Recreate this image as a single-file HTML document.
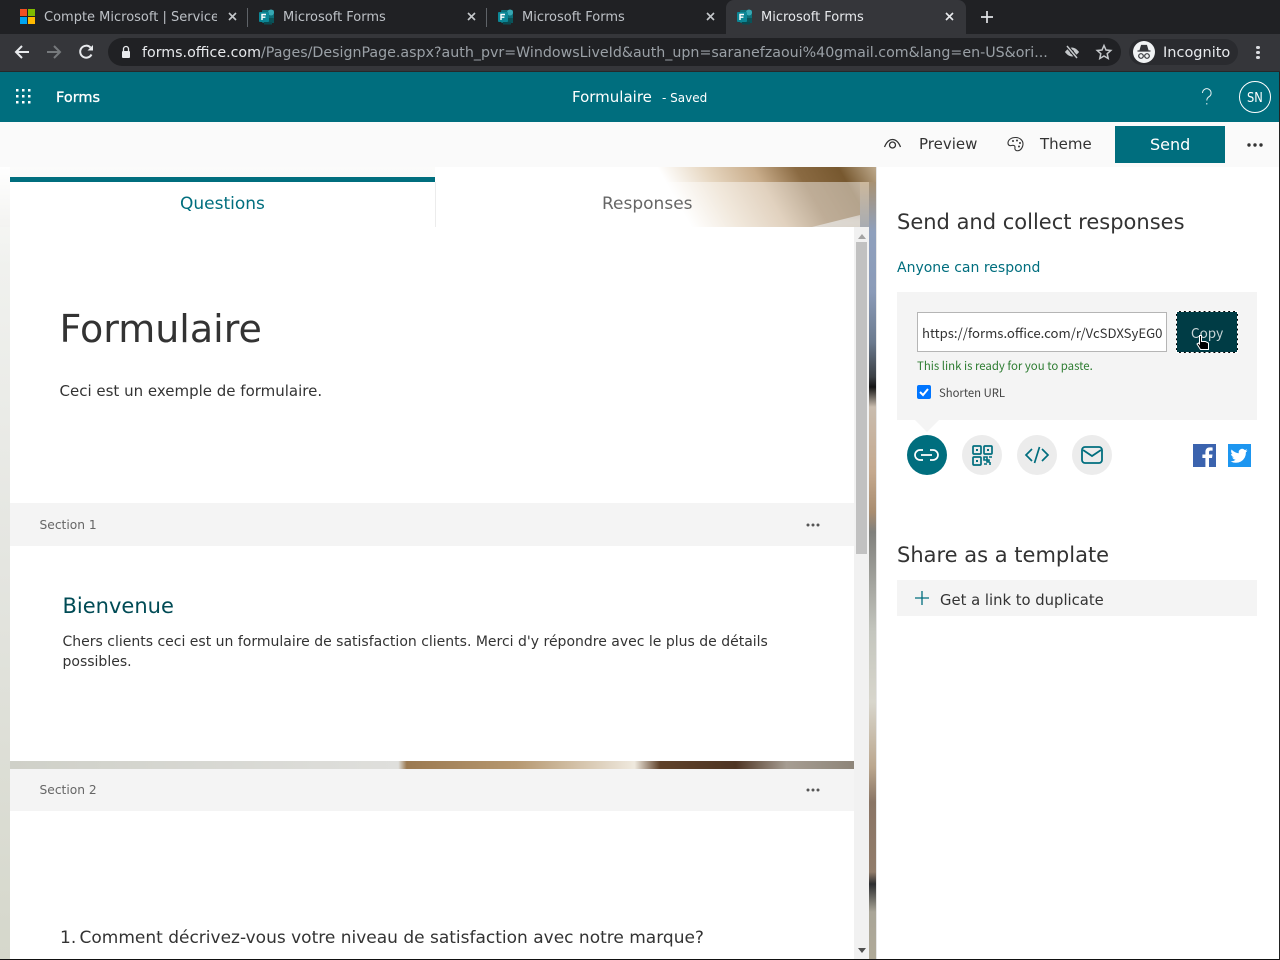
<!DOCTYPE html>
<html><head><meta charset="utf-8"><style>
html,body{margin:0;padding:0;background:#fff}
body{width:1280px;height:960px;position:relative;overflow:hidden;font-family:"DejaVu Sans",sans-serif}
.a{position:absolute}
.t{position:absolute;white-space:nowrap;line-height:1}
.n{font-family:"Noto Sans CJK JP","Liberation Sans",sans-serif}
svg{position:absolute;overflow:visible}
</style></head><body>
<svg width="0" height="0" style="left:0;top:0"><defs><symbol id="ff" viewBox="0 0 16 16"><rect x="3" y="1" width="12" height="13" rx="1" fill="#0d6f78"/><circle cx="12" cy="3.500" r="3" fill="#37a8b4"/><rect x="9" y="9" width="6" height="5" fill="#0a5359"/><rect x="5" y="13" width="8" height="2.500" fill="#0a4a50"/><rect x="0" y="3" width="10" height="10" rx="1" fill="#0c8796"/><path d="M3 11V5.500h4M3 8.200h3.400" stroke="#fff" stroke-width="1.400" fill="none"/></symbol></defs></svg>
<!-- chrome -->
<div class="a" style="left:0;top:0;width:1280px;height:34px;background:#202124"></div>
<div class="a" style="left:0;top:34px;width:1280px;height:38px;background:#35363a"></div>
<div class="a" style="left:0;top:71px;width:1280px;height:1px;background:#26282a"></div>
<div class="a" style="left:726px;top:0;width:240px;height:34px;background:#35363a;border-radius:8px 8px 0 0"></div>
<div class="a" style="left:247px;top:8px;width:1px;height:19px;background:#5f6368"></div>
<div class="a" style="left:486px;top:8px;width:1px;height:19px;background:#5f6368"></div>
<!-- ms logo -->
<div class="a" style="left:20px;top:9px;width:7px;height:7px;background:#f25022"></div>
<div class="a" style="left:28px;top:9px;width:7px;height:7px;background:#7fba00"></div>
<div class="a" style="left:20px;top:17px;width:7px;height:7px;background:#00a4ef"></div>
<div class="a" style="left:28px;top:17px;width:7px;height:7px;background:#ffb900"></div>
<div class="t" style="left:44px;top:11px;font-size:13px;color:#bdc1c6;width:173px;overflow:hidden">Compte Microsoft | Service</div>
<svg style="left:259px;top:9px" width="16" height="16"><use href="#ff"/></svg>
<svg style="left:498px;top:9px" width="16" height="16"><use href="#ff"/></svg>
<svg style="left:737px;top:9px" width="16" height="16"><use href="#ff"/></svg>
<div class="t" style="left:283px;top:11px;font-size:13px;color:#bdc1c6">Microsoft Forms</div>
<div class="t" style="left:522px;top:11px;font-size:13px;color:#bdc1c6">Microsoft Forms</div>
<div class="t" style="left:761px;top:11px;font-size:13px;color:#e8eaed">Microsoft Forms</div>
<svg style="left:228px;top:12px" width="9" height="9"><path d="M1 1l7 7M8 1l-7 7" stroke="#c4c7ca" stroke-width="1.600"/></svg>
<svg style="left:467px;top:12px" width="9" height="9"><path d="M1 1l7 7M8 1l-7 7" stroke="#c4c7ca" stroke-width="1.600"/></svg>
<svg style="left:706px;top:12px" width="9" height="9"><path d="M1 1l7 7M8 1l-7 7" stroke="#c4c7ca" stroke-width="1.600"/></svg>
<svg style="left:945px;top:12px" width="9" height="9"><path d="M1 1l7 7M8 1l-7 7" stroke="#e8eaed" stroke-width="1.600"/></svg>
<svg style="left:981px;top:11px" width="12" height="12"><path d="M6 0v12M0 6h12" stroke="#e0e2e5" stroke-width="1.700"/></svg>
<svg style="left:14px;top:44px" width="16" height="16"><path d="M15 8H2M8 2L2 8l6 6" stroke="#e8eaed" stroke-width="2" fill="none"/></svg>
<svg style="left:46px;top:44px" width="16" height="16"><path d="M1 8h13M8 2l6 6-6 6" stroke="#76797c" stroke-width="2" fill="none"/></svg>
<svg style="left:78px;top:44px" width="16" height="16"><path d="M13.500 10.500A6 6 0 1 1 12.500 3.500" stroke="#e8eaed" stroke-width="2" fill="none"/><path d="M9.500 6.500H15V1z" fill="#e8eaed"/></svg>
<div class="a" style="left:108px;top:38px;width:1013px;height:28px;border-radius:14px;background:#202124"></div>
<svg style="left:120px;top:45px" width="12" height="14"><rect x="2" y="6" width="8" height="7" rx="1" fill="#e8eaed"/><path d="M3.500 6V4a2.500 2.500 0 0 1 5 0v2" stroke="#e8eaed" stroke-width="1.300" fill="none"/></svg>
<div class="t" style="left:142px;top:45px;font-size:14.220px;line-height:16px;color:#9aa0a6;width:907px;overflow:hidden"><span style="color:#e8eaed">forms.office.com</span>/Pages/DesignPage.aspx?auth_pvr=WindowsLiveId&amp;auth_upn=saranefzaoui%40gmail.com&amp;lang=en-US&amp;ori...</div>
<svg style="left:1064px;top:44px" width="16" height="16"><path d="M1 8s3-4.500 7-4.500S15 8 15 8s-3 4.500-7 4.500S1 8 1 8z" fill="#c4c7ca"/><circle cx="8" cy="8" r="2" fill="#202124"/><path d="M3 2l10 12" stroke="#202124" stroke-width="3.500"/><path d="M3 2l10 12" stroke="#c4c7ca" stroke-width="1.500"/></svg>
<svg style="left:1096px;top:44px" width="16" height="16"><path d="M8 1.500l2 4.500 4.800.5-3.600 3.200 1 4.800L8 12l-4.200 2.500 1-4.800L1.200 6.500 6 6z" stroke="#c4c7ca" stroke-width="1.500" fill="none"/></svg>
<div class="a" style="left:1129px;top:39px;width:109px;height:26px;border-radius:13px;background:#2a2b2f"></div>
<div class="a" style="left:1133px;top:41px;width:22px;height:22px;border-radius:11px;background:#f1f3f4"></div>
<svg style="left:1133px;top:41px" width="22" height="22"><path d="M7 9.500l1.500-5h5l1.500 5zM4.500 10h13" stroke="#35363a" stroke-width="1.200" fill="#35363a"/><circle cx="8" cy="15" r="2.300" stroke="#35363a" stroke-width="1.200" fill="none"/><circle cx="14" cy="15" r="2.300" stroke="#35363a" stroke-width="1.200" fill="none"/></svg>
<div class="t" style="left:1163px;top:46px;font-size:14.500px;line-height:15px;color:#e8eaed">Incognito</div>
<div class="a" style="left:1256px;top:46px;width:4px;height:3px;border-radius:2px;background:#dadce0"></div>
<div class="a" style="left:1256px;top:51px;width:4px;height:3px;border-radius:2px;background:#dadce0"></div>
<div class="a" style="left:1256px;top:56px;width:4px;height:3px;border-radius:2px;background:#dadce0"></div>
<!-- app bar -->
<div class="a" style="left:0;top:72px;width:1280px;height:50px;background:#006e7e"></div>
<svg style="left:15px;top:88px" width="17" height="17" fill="#fff"><rect x="1" y="1" width="2.500" height="2.500"/><rect x="7" y="1" width="2.500" height="2.500"/><rect x="13" y="1" width="2.500" height="2.500"/><rect x="1" y="7" width="2.500" height="2.500"/><rect x="7" y="7" width="2.500" height="2.500"/><rect x="13" y="7" width="2.500" height="2.500"/><rect x="1" y="13" width="2.500" height="2.500"/><rect x="7" y="13" width="2.500" height="2.500"/><rect x="13" y="13" width="2.500" height="2.500"/></svg>
<div class="t" style="left:56px;top:91px;font-size:14.500px;color:#fff;-webkit-text-stroke:.3px #fff">Forms</div>
<div class="t" style="left:572px;top:90px;font-size:15px;color:#fff">Formulaire</div>
<div class="t" style="left:662px;top:92px;font-size:12px;color:#fff">- Saved</div>
<svg style="left:1200px;top:88px" width="14" height="18"><path d="M2.500 5a4.300 4.300 0 1 1 6.500 3.700C7.500 9.700 6.800 10.500 6.800 12.500M6.800 15v1.500" stroke="#e6f1f3" stroke-width="1" fill="none"/></svg>
<div class="a" style="left:1239px;top:81px;width:30px;height:30px;border:1px solid #fff;border-radius:50%"></div>
<div class="t" style="left:1247px;top:92px;font-size:13px;color:#fff;transform:scaleX(.88);transform-origin:left">SN</div>
<!-- background slivers -->
<div class="a" style="left:0;top:122px;width:1280px;height:45px;background:#fafafa"></div>
<div class="a" style="left:0;top:167px;width:877px;height:793px;background:linear-gradient(180deg,#fbfbfa 0,#f0f1ee 100px,#e4e5e0 400px,#d5d7cb 793px)"></div>
<div class="a" style="left:0;top:167px;width:10px;height:60px;background:linear-gradient(180deg,#fff,#f3f3f1)"></div>
<div class="a" style="left:435px;top:167px;width:441px;height:60px;overflow:hidden;background:linear-gradient(60deg,#fff 0,#fff 54%,#e6d6c0 64%,#c9ad8b 74%,#8a6a42 83%,#77582f 92%,#bda98c 100%)">
<div class="a" style="left:345px;top:44px;width:96px;height:24px;background:rgba(225,228,230,.7);clip-path:polygon(100% 0,100% 100%,0 100%);filter:blur(7px)"></div>
</div>
<div class="a" style="left:869px;top:182px;width:8px;height:778px;background:linear-gradient(180deg,#a89273 0,#8fa0bd 50px,#8b9bb8 110px,#6b7a8e 160px,#3b3f44 195px,#141414 205px,#c9bcae 225px,#c5a98e 290px,#a98d70 330px,#80807c 350px,#a9aaa4 410px,#c4c6be 450px,#d8d6cc 520px,#bba78e 585px,#8a7565 620px,#917c6a 690px,#2d2e30 702px,#a9a597 730px,#b0aa98 778px)"></div>
<div class="a" style="left:860px;top:182px;width:9px;height:45px;background:linear-gradient(180deg,#ccb89c,#a8acb2)"></div>
<div class="a" style="left:10px;top:761px;width:844px;height:8px;background:linear-gradient(90deg,#cfd0c8 0,#dfdfdc 46%,#9b7950 47%,#b69870 60%,#efe9de 74%,#5f4129 77%,#4e3523 86%,#a69d92 92%,#8e8579 100%)"></div>
<!-- tabs -->
<div class="a" style="left:10px;top:177px;width:425px;height:50px;background:#fff"></div>
<div class="a" style="left:10px;top:177px;width:425px;height:5px;background:#006e7e"></div>
<div class="a" style="left:435px;top:182px;width:425px;height:45px;background:rgba(255,255,255,.45);border-left:1px solid #ececec;box-sizing:border-box"></div>
<div class="t" style="left:180px;top:196px;font-size:17px;line-height:17px;color:#006e7e">Questions</div>
<div class="t" style="left:602px;top:196px;font-size:17px;line-height:17px;color:#666">Responses</div>
<!-- form -->
<div class="a" style="left:10px;top:227px;width:844px;height:534px;background:#fff"></div>
<div class="a" style="left:10px;top:769px;width:844px;height:191px;background:#fff"></div>
<div class="a" style="left:854px;top:227px;width:15px;height:733px;background:#f1f1f1"></div>
<div class="a" style="left:856px;top:242px;width:11px;height:312px;background:#c1c1c1"></div>
<div class="a" style="left:858px;top:234px;border:4px solid transparent;border-top:0;border-bottom:5px solid #a3a3a3"></div>
<div class="a" style="left:858px;top:948px;border:4px solid transparent;border-bottom:0;border-top:5px solid #505050"></div>
<div class="t" style="left:59.500px;top:310px;font-size:38px;color:#333">Formulaire</div>
<div class="t" style="left:59.500px;top:384px;font-size:15px;color:#333">Ceci est un exemple de formulaire.</div>
<div class="a" style="left:10px;top:503px;width:844px;height:43px;background:#f4f4f4"></div>
<div class="t" style="left:39.500px;top:519px;font-size:12.250px;line-height:13px;color:#666">Section 1</div>
<svg style="left:806px;top:523px" width="14" height="4" fill="#555"><circle cx="2" cy="2" r="1.500"/><circle cx="7" cy="2" r="1.500"/><circle cx="12" cy="2" r="1.500"/></svg>
<div class="t" style="left:62.500px;top:596px;font-size:21px;color:#004b55">Bienvenue</div>
<div class="t" style="left:62.500px;top:632px;width:740px;font-size:14px;line-height:20px;color:#333;white-space:normal">Chers clients ceci est un formulaire de satisfaction clients. Merci d'y répondre avec le plus de détails possibles.</div>
<div class="a" style="left:10px;top:769px;width:844px;height:42px;background:#f4f4f4"></div>
<div class="t" style="left:39.500px;top:784px;font-size:12.250px;line-height:13px;color:#666">Section 2</div>
<svg style="left:806px;top:788px" width="14" height="4" fill="#555"><circle cx="2" cy="2" r="1.500"/><circle cx="7" cy="2" r="1.500"/><circle cx="12" cy="2" r="1.500"/></svg>
<div class="t" style="left:60px;top:930px;font-size:17px;color:#333">1.</div>
<div class="t" style="left:79.500px;top:930px;font-size:17px;color:#333">Comment décrivez-vous votre niveau de satisfaction avec notre marque?</div>
<!-- right panel -->
<div class="a" style="left:877px;top:167px;width:403px;height:793px;background:#fff"></div>
<div class="a" style="left:876px;top:167px;width:1px;height:793px;background:#e6e6e6"></div>
<svg style="left:883px;top:137px" width="20" height="14"><path d="M1.500 10C3.500 5 6.500 2.500 9.500 2.500S15.500 5 17.500 10" stroke="#333" stroke-width="1.300" fill="none"/><circle cx="9.500" cy="8" r="3" stroke="#333" stroke-width="1.300" fill="none"/></svg>
<div class="t" style="left:919px;top:137px;font-size:15px;color:#333">Preview</div>
<svg style="left:1007px;top:136px" width="18" height="17"><path d="M8.500 1.500C4 1.500 1 4 1 7c0 2.500 2 3 3.500 2.500 2-.5 3.500 0 3.500 1.500s-.5 2 .5 3 3 1 4.500 0 3-3.500 3-6c0-3.500-3-6.500-7.500-6.500z" stroke="#333" stroke-width="1.100" fill="none"/><circle cx="6" cy="5" r="1" fill="#333"/><circle cx="10" cy="4.500" r="1" fill="#333"/><circle cx="13" cy="7" r="1" fill="#333"/><circle cx="12" cy="10.500" r="1" fill="#333"/></svg>
<div class="t" style="left:1040px;top:137px;font-size:15px;color:#333">Theme</div>
<div class="a" style="left:1115px;top:126px;width:110px;height:37px;background:#006e7e"></div>
<div class="t" style="left:1150px;top:137px;font-size:16px;color:#fff">Send</div>
<svg style="left:1247px;top:143px" width="16" height="4" fill="#333"><circle cx="2" cy="2" r="1.700"/><circle cx="8" cy="2" r="1.700"/><circle cx="14" cy="2" r="1.700"/></svg>
<div class="t" style="left:897px;top:212px;font-size:21px;color:#333">Send and collect responses</div>
<div class="t" style="left:897px;top:261px;font-size:14px;color:#006e7e">Anyone can respond</div>
<div class="a" style="left:897px;top:292px;width:360px;height:128px;background:#f4f4f4"></div>
<div class="a" style="left:917px;top:312px;width:250px;height:40px;background:#fff;border:1px solid #b5b5b5;box-sizing:border-box"></div>
<div class="t n" style="left:922px;top:325px;font-size:13.170px;line-height:16px;color:#333;width:241px;overflow:hidden">https://forms.office.com/r/VcSDXSyEG0</div>
<div class="a" style="left:1176px;top:311px;width:62px;height:42px;background:#000"></div>
<div class="a" style="left:1176px;top:311px;width:62px;height:42px;background:#003c45;background-clip:padding-box;border:1px dashed #fff;box-sizing:border-box"></div>
<div class="t n" style="left:1191px;top:324px;font-size:13.500px;line-height:16px;color:#c8d5d7">Copy</div>
<svg style="left:1195px;top:334px" width="16" height="18"><path d="M4.500 1.500h2v6h4l3 1.500v6.500h-8L2 10l1.500-1 1 1z" fill="#000" stroke="#fff" stroke-width="1"/></svg>
<div class="t n" style="left:917px;top:359px;font-size:11.420px;line-height:14px;color:#2e7d32">This link is ready for you to paste.</div>
<div class="a" style="left:917px;top:385px;width:14px;height:14px;background:#0075ff;border-radius:2px"></div>
<svg style="left:917px;top:385px" width="14" height="14"><path d="M3 7l3 3 5-6" stroke="#fff" stroke-width="2" fill="none"/></svg>
<div class="t n" style="left:939px;top:386px;font-size:11.300px;line-height:14px;color:#444">Shorten URL</div>
<svg style="left:915px;top:420px" width="24" height="16"><path d="M0 0h24L12 12z" fill="#f4f4f4"/></svg>
<div class="a" style="left:907px;top:435px;width:40px;height:40px;border-radius:50%;background:#006e7e"></div>
<div class="a" style="left:962px;top:435px;width:40px;height:40px;border-radius:50%;background:#ececec"></div>
<div class="a" style="left:1017px;top:435px;width:40px;height:40px;border-radius:50%;background:#ececec"></div>
<div class="a" style="left:1072px;top:435px;width:40px;height:40px;border-radius:50%;background:#ececec"></div>
<svg style="left:907px;top:435px" width="40" height="40" fill="none" stroke="#fff" stroke-width="1.700"><path d="M16 15h-3a5 5 0 0 0 0 10h3M23 15h3a5 5 0 0 1 0 10h-3M14 20h11"/></svg>
<svg style="left:962px;top:435px" width="40" height="40" fill="none" stroke="#006e7e" stroke-width="1.700"><rect x="11" y="11" width="8" height="8" rx="1"/><rect x="22" y="11" width="8" height="8" rx="1"/><rect x="11" y="22" width="8" height="8" rx="1"/><path d="M22 22h3v3h-3zM27 22h3M25 25h2v2h-2zM22 29h3M28 27v3" stroke-width="1.600"/><rect x="14" y="14" width="2" height="2" fill="#006e7e" stroke="none"/><rect x="25" y="14" width="2" height="2" fill="#006e7e" stroke="none"/><rect x="14" y="25" width="2" height="2" fill="#006e7e" stroke="none"/></svg>
<svg style="left:1017px;top:435px" width="40" height="40" fill="none" stroke="#006e7e" stroke-width="1.700"><path d="M15 14l-6 6 6 6M25 14l6 6-6 6M22.500 12l-5 16"/></svg>
<svg style="left:1072px;top:435px" width="40" height="40" fill="none" stroke="#006e7e" stroke-width="1.800"><rect x="10" y="12" width="20" height="16" rx="3"/><path d="M11 15l9 6 9-6"/></svg>
<div class="a" style="left:1193px;top:444px;width:23px;height:23px;background:#3b63ae"></div>
<svg style="left:1193px;top:444px" width="23" height="23"><path d="M16 23v-9h3l.500-3.500H16V8.300c0-1 .3-1.700 1.800-1.700h1.800V3.500c-.4 0-1.500-.1-2.700-.1-2.700 0-4.500 1.600-4.500 4.600v2.500h-3V14h3v9z" fill="#fff"/></svg>
<div class="a" style="left:1228px;top:444px;width:23px;height:23px;background:#1d96f0"></div>
<svg style="left:1228px;top:444px" width="23" height="23"><path d="M19.500 6.500c-.6.300-1.300.5-2 .6.700-.4 1.300-1.100 1.500-1.900-.7.400-1.400.7-2.200.8a3.500 3.500 0 0 0-6 3.200C7.900 9 5.400 7.600 3.600 5.500c-.9 1.600-.5 3.600 1.100 4.700-.6 0-1.100-.2-1.600-.4 0 1.700 1.200 3.100 2.800 3.400-.5.100-1 .2-1.600.1.400 1.400 1.700 2.400 3.300 2.400A7 7 0 0 1 2.500 17.200a10 10 0 0 0 15.400-8.900c.6-.5 1.200-1.100 1.600-1.800z" fill="#fff"/></svg>
<div class="t" style="left:897px;top:545px;font-size:21px;color:#333">Share as a template</div>
<div class="a" style="left:897px;top:580px;width:360px;height:36px;background:#f4f4f4"></div>
<svg style="left:914px;top:590px" width="16" height="16"><path d="M8 1v14M1 8h14" stroke="#006e7e" stroke-width="1.300"/></svg>
<div class="t" style="left:940px;top:594px;font-size:14.800px;color:#333">Get a link to duplicate</div>
<div class="a" style="left:0;top:959px;width:1280px;height:1px;background:#111"></div>
<div class="a" style="left:1279px;top:72px;width:1px;height:888px;background:#222"></div>
</body></html>
